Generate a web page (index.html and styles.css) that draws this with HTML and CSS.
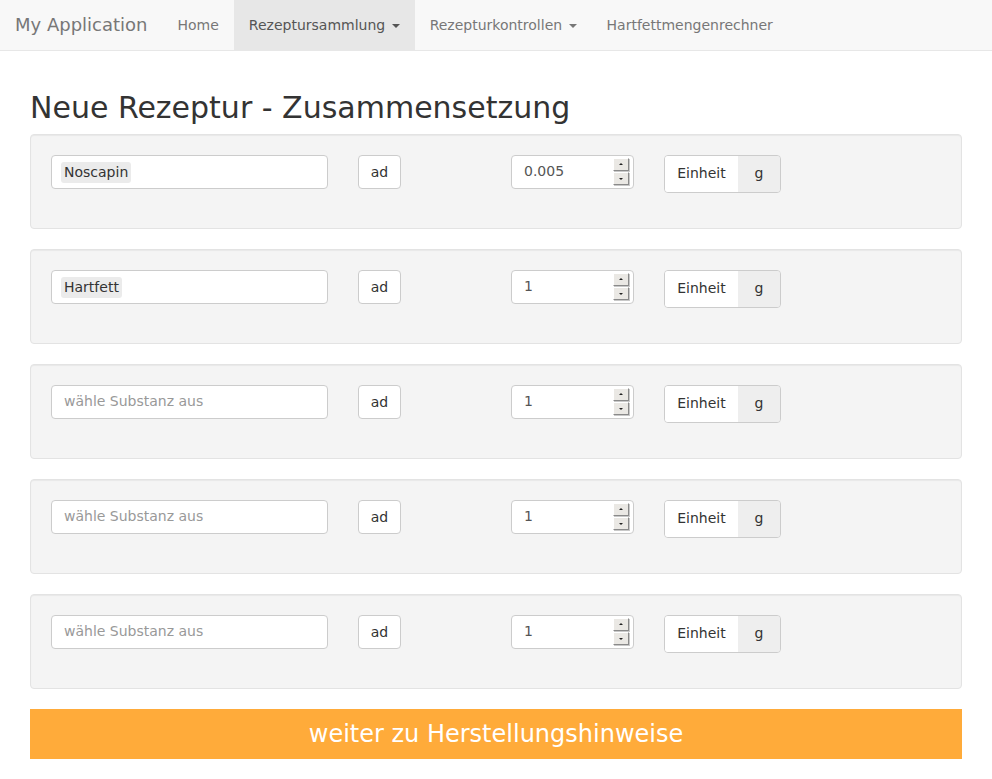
FILE: index.html
```html
<!DOCTYPE html>
<html>
<head>
<meta charset="utf-8">
<link rel="stylesheet" href="styles.css">
</head>
<body>
<nav class="navbar">
  <a class="brand">My Application</a>
  <ul class="nav">
    <li><a>Home</a></li>
    <li class="active"><a>Rezeptursammlung <span class="caret"></span></a></li>
    <li><a>Rezepturkontrollen <span class="caret"></span></a></li>
    <li><a>Hartfettmengenrechner</a></li>
  </ul>
</nav>
<main class="container">
  <h2 class="title">Neue Rezeptur - Zusammensetzung</h2>

  <div class="well">
    <div class="row">
      <div class="substance"><span class="chip">Noscapin</span></div>
      <div class="ad">ad</div>
      <div class="number"><span class="val">0.005</span><span class="spin"><i class="up"></i><i class="down"></i></span></div>
      <div class="unit"><span class="label">Einheit</span><span class="addon">g</span></div>
    </div>
  </div>

  <div class="well">
    <div class="row">
      <div class="substance"><span class="chip">Hartfett</span></div>
      <div class="ad">ad</div>
      <div class="number"><span class="val">1</span><span class="spin"><i class="up"></i><i class="down"></i></span></div>
      <div class="unit"><span class="label">Einheit</span><span class="addon">g</span></div>
    </div>
  </div>

  <div class="well">
    <div class="row">
      <div class="substance"><span class="placeholder">wähle Substanz aus</span></div>
      <div class="ad">ad</div>
      <div class="number"><span class="val">1</span><span class="spin"><i class="up"></i><i class="down"></i></span></div>
      <div class="unit"><span class="label">Einheit</span><span class="addon">g</span></div>
    </div>
  </div>

  <div class="well">
    <div class="row">
      <div class="substance"><span class="placeholder">wähle Substanz aus</span></div>
      <div class="ad">ad</div>
      <div class="number"><span class="val">1</span><span class="spin"><i class="up"></i><i class="down"></i></span></div>
      <div class="unit"><span class="label">Einheit</span><span class="addon">g</span></div>
    </div>
  </div>

  <div class="well">
    <div class="row">
      <div class="substance"><span class="placeholder">wähle Substanz aus</span></div>
      <div class="ad">ad</div>
      <div class="number"><span class="val">1</span><span class="spin"><i class="up"></i><i class="down"></i></span></div>
      <div class="unit"><span class="label">Einheit</span><span class="addon">g</span></div>
    </div>
  </div>

  <button class="next">weiter zu Herstellungshinweise</button>
</main>
</body>
</html>
```

FILE: styles.css
```css
* { box-sizing: border-box; }
html, body { margin: 0; padding: 0; }
body {
  font-family: "DejaVu Sans", sans-serif;
  font-size: 14px;
  line-height: 1.42857;
  color: #333;
  background: #fff;
}
.navbar {
  display: flex;
  height: 51px;
  background: #f8f8f8;
  border-bottom: 1px solid #e7e7e7;
}
.brand {
  display: block;
  padding: 0 15px;
  font-size: 18px;
  line-height: 50px;
  color: #777;
}
.nav {
  display: flex;
  list-style: none;
  margin: 0;
  padding: 0;
}
.nav a {
  display: block;
  padding: 0 15px;
  line-height: 50px;
  color: #777;
}
.nav .active a {
  background: #e7e7e7;
  color: #555;
}
.caret {
  display: inline-block;
  width: 0;
  height: 0;
  margin-left: 2px;
  vertical-align: middle;
  border-top: 4px solid;
  border-left: 4px solid transparent;
  border-right: 4px solid transparent;
}
.container {
  padding: 0 30px;
}
.title {
  margin: 40px 0 10px;
  font-size: 30px;
  font-weight: 500;
  line-height: 33px;
  color: #333;
}
.well {
  background: #f4f4f4;
  border: 1px solid #e3e3e3;
  border-radius: 4px;
  box-shadow: inset 0 1px 1px rgba(0,0,0,.05);
  padding: 20px 20px 0;
  height: 95px;
  margin-bottom: 20px;
}
.row {
  display: flex;
  align-items: flex-start;
}
.substance {
  width: 277px;
  height: 34px;
  background: #fff;
  border: 1px solid #ccc;
  border-radius: 4px;
  padding: 5px 9px;
  display: flex;
  align-items: center;
}
.chip {
  background: #ebebeb;
  border-radius: 3px;
  padding: 1px 3px;
  line-height: 19px;
  color: #333;
}
.placeholder {
  color: #999;
  padding-left: 3px;
}
.ad {
  margin-left: 30px;
  width: 43px;
  height: 34px;
  background: #fff;
  border: 1px solid #ccc;
  border-radius: 4px;
  line-height: 32px;
  text-align: center;
  color: #333;
}
.number {
  margin-left: 110px;
  width: 123px;
  height: 34px;
  background: #fff;
  border: 1px solid #ccc;
  border-radius: 4px;
  display: flex;
  align-items: center;
  justify-content: space-between;
  padding: 0 4px 0 12px;
  color: #555;
}
.val { line-height: 20px; margin-top: -2px; }
.spin {
  display: flex;
  flex-direction: column;
  gap: 1px;
  margin-top: -2px;
}
.spin i {
  position: relative;
  display: block;
  width: 16px;
  height: 13px;
  background: #eae8e4;
  border: 1px solid;
  border-color: #fff #8a8a8a #8a8a8a #fff;
  box-shadow: 1px 1px 0 #c8c8c8;
}
.spin i::after {
  content: "";
  position: absolute;
  left: 5px;
  width: 0;
  height: 0;
  border-left: 2px solid transparent;
  border-right: 2px solid transparent;
}
.spin .up::after { top: 4px; border-bottom: 2px solid #222; }
.spin .down::after { top: 5px; border-top: 2px solid #222; }
.unit {
  margin-left: 30px;
  display: flex;
  height: 38px;
  border: 1px solid #ccc;
  border-radius: 4px;
  overflow: hidden;
}
.unit .label {
  width: 73px;
  background: #fff;
  text-align: center;
  line-height: 35px;
  color: #333;
}
.unit .addon {
  width: 42px;
  background: #eee;
  text-align: center;
  line-height: 34px;
  color: #333;
}
.next {
  display: block;
  width: 100%;
  height: 50px;
  margin: 0;
  border: 0;
  background: #ffab3a;
  color: #fff;
  font-family: "DejaVu Sans", sans-serif;
  font-size: 24px;
  line-height: 50px;
  padding: 0;
}
```
